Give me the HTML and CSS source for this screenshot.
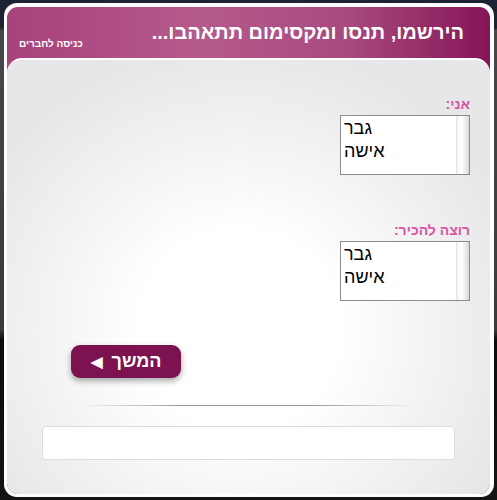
FILE: index.html
```html
<!DOCTYPE html>
<html lang="he" dir="rtl">
<head>
  <meta charset="UTF-8">
  <title>הרשמה</title>
  <link rel="stylesheet" href="styles.css">
</head>
<body>
  <div class="modal">
    <div class="inner">
      <div class="header">
        <h1 class="title">הירשמו, תנסו ומקסימום תתאהבו...</h1>
        <a class="members">כניסה לחברים</a>
      </div>
      <div class="panel">
        <div class="field">
          <div class="label">אני:</div>
          <div class="listbox">
            <div class="options">
              <div class="option">גבר</div>
              <div class="option">אישה</div>
            </div>
            <div class="scroll"></div>
          </div>
        </div>
        <div class="field second">
          <div class="label">רוצה להכיר:</div>
          <div class="listbox">
            <div class="options">
              <div class="option">גבר</div>
              <div class="option">אישה</div>
            </div>
            <div class="scroll"></div>
          </div>
        </div>
        <div class="actions">
          <button class="next">המשך <span class="arrow">&#9664;</span></button>
        </div>
        <div class="divider"></div>
        <div class="bottom-box"></div>
      </div>
    </div>
  </div>
</body>
</html>
```

FILE: styles.css
```css
body {
  margin: 0;
  height: 500px;
  background: linear-gradient(#1d2331 0, #1d2331 28px, #47474a 30px, #3a3a3c 330px, #0d0d0f 340px, #141416 500px);
  font-family: 'Liberation Sans', Arial, sans-serif;
  overflow: hidden;
}
.modal {
  margin: 3px;
  width: 490px;
  height: 494px;
  box-sizing: border-box;
  background: #fff;
  border-radius: 13px;
  padding: 4px 4px 3px 3px;
}
.inner {
  height: 100%;
  border-radius: 11px;
  overflow: hidden;
  display: flex;
  flex-direction: column;
  background: linear-gradient(to right, #a8417c, #b55a8d 40%, #a84a80 70%, #861556);
}
.header {
  height: 51px;
  display: flex;
  justify-content: space-between;
  align-items: flex-start;
  padding: 0 26px 0 12px;
  color: #fff;
}
.title {
  margin: 14px 0 0 0;
  font-size: 20px;
  font-weight: bold;
}
.members {
  margin-top: 31px;
  font-size: 10px;
  font-weight: bold;
}
.panel {
  flex: 1;
  border-top: 2px solid #fff;
  border-radius: 15px 15px 0 0;
  background: radial-gradient(ellipse 60% 65% at 48% 62%, #ffffff 35%, #e7e6e8 100%);
  padding: 36px 20px 0 35px;
}
.field {
  display: flex;
  flex-direction: column;
  align-items: flex-start;
}
.second {
  margin-top: 47px;
}
.label {
  color: #d9559f;
  font-size: 14px;
  font-weight: bold;
  margin-bottom: 3px;
}
.listbox {
  width: 130px;
  height: 60px;
  box-sizing: border-box;
  border: 1px solid #8c8c8c;
  background: #fff;
  display: flex;
  direction: ltr;
}
.options {
  flex: 1;
  padding: 1px 3px;
}
.option {
  font-size: 18px;
  line-height: 23px;
  color: #000;
  text-align: left;
}
.scroll {
  width: 12px;
  background: linear-gradient(to right, #f4f4f4, #ffffff 40%, #d9d9d9);
  border-left: 1px solid #e4e4e4;
}
.actions {
  margin-top: 44px;
  display: flex;
  justify-content: flex-end;
  padding-left: 29px;
}
.next {
  width: 110px;
  height: 33px;
  border: none;
  border-radius: 9px;
  background: #7c1350;
  color: #fff;
  font-family: 'Liberation Sans', Arial, sans-serif;
  font-size: 18px;
  font-weight: bold;
  box-shadow: 0 3px 6px rgba(0, 0, 0, 0.35);
  padding: 0;
}
.arrow {
  font-size: 15px;
  margin-right: 4px;
}
.divider {
  height: 1px;
  margin: 27px 53px 0 37px;
  background: linear-gradient(to right, rgba(150,150,150,0), #999 30%, #999 70%, rgba(150,150,150,0));
}
.bottom-box {
  margin: 20px 15px 0 0;
  height: 34px;
  box-sizing: border-box;
  background: #fff;
  border: 1px solid #dcdcdc;
  border-radius: 4px;
}
```
